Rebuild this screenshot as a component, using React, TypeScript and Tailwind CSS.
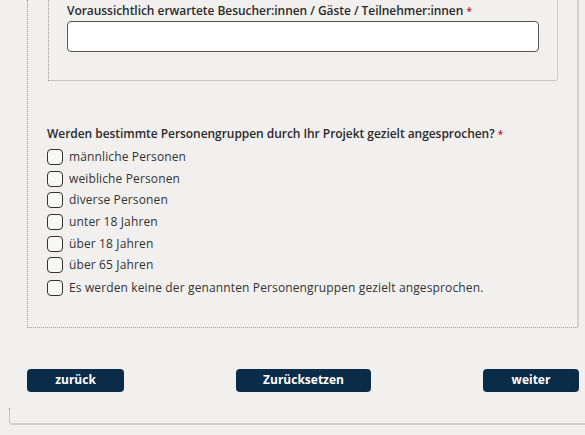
import React from "react";

const options = [
  "männliche Personen",
  "weibliche Personen",
  "diverse Personen",
  "unter 18 Jahren",
  "über 18 Jahren",
  "über 65 Jahren",
];

function Check({ label, className = "" }: { label: string; className?: string }) {
  return (
    <label className={"flex h-[21.7px] items-center gap-[6px] " + className}>
      <span className="h-[16px] w-[16px] shrink-0 rounded-[4px] border-[1.5px] border-[#333] bg-[#f7f7f6]" />
      <span className="text-[12px] leading-[16px] tracking-[0.13px] text-[#333]">{label}</span>
    </label>
  );
}

export default function App() {
  return (
    <div
      className="h-[435px] w-[585px] overflow-hidden bg-[#f1f0ee]"
      style={{ fontFamily: '"Open Sans", "Noto Sans", sans-serif' }}
    >
      <div className="ml-[27px] w-[552px]">
        {/* outer box */}
        <div className="rounded-br-[3px] border-b border-l border-r-2 border-b-[#9a9a9a] border-l-[#9a9a9a] border-r-[#d2d2d2] [border-bottom-style:dotted] [border-left-style:dotted] pb-[28px]">
          {/* inner box */}
          <div className="ml-[20px] mr-[19px] rounded-br-[3px] border-b border-l border-r border-b-[#9a9a9a] border-l-[#9a9a9a] border-r-[#cfcfcf] [border-bottom-style:dotted] [border-left-style:dotted] px-[18px] pb-[28px] pt-[3px]">
            <div className="text-[12px] font-semibold leading-[16px] tracking-[-0.05px] text-[#2b2b2b]">
              Voraussichtlich erwartete Besucher:innen / Gäste / Teilnehmer:innen{" "}
              <span className="align-top text-[10px] text-[#c8102e]">*</span>
            </div>
            <div className="mt-[2px] h-[31px] rounded-[4px] border border-[#555] bg-white" />
          </div>

          <div className="ml-[19px] mt-[45px]">
            <div className="text-[12px] font-semibold leading-[16px] tracking-[-0.05px] text-[#2b2b2b]">
              Werden bestimmte Personengruppen durch Ihr Projekt gezielt angesprochen?{" "}
              <span className="align-top text-[10px] text-[#c8102e]">*</span>
            </div>
            <div className="mt-[4px] flex flex-col">
              {options.map((o) => (
                <Check key={o} label={o} />
              ))}
              <Check
                label="Es werden keine der genannten Personengruppen gezielt angesprochen."
                className="mt-[1px]"
              />
            </div>
          </div>
        </div>

        {/* buttons */}
        <div className="mt-[41px] flex items-center justify-between">
          <button className="h-[23px] w-[97px] rounded-[4px] bg-[#0b2c48] text-[12px] font-bold text-white">
            zurück
          </button>
          <button className="h-[23px] w-[135px] rounded-[4px] bg-[#0b2c48] text-[12px] font-bold text-white">
            Zurücksetzen
          </button>
          <button className="h-[23px] w-[96px] rounded-[4px] bg-[#0b2c48] text-[12px] font-bold text-white">
            weiter
          </button>
        </div>
      </div>

      {/* footer edge */}
      <div className="ml-[9px] mt-[16px] h-[17px] w-[600px] rounded-bl-[4px] border-b-2 border-l border-b-[#cfcfcf] border-l-[#9a9a9a] [border-left-style:dotted]" />
    </div>
  );
}
